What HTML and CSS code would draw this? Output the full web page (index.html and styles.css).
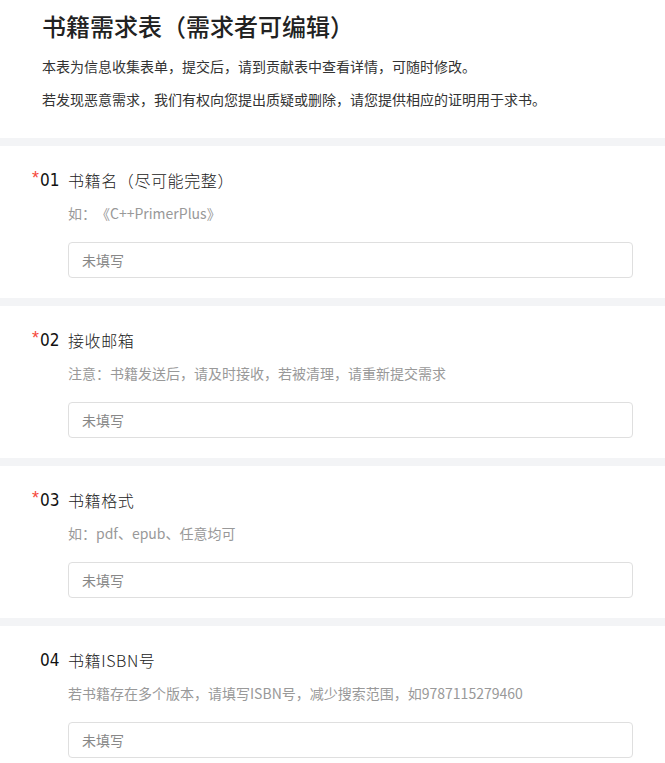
FILE: index.html
```html
<!DOCTYPE html>
<html lang="zh-CN">
<head>
<meta charset="utf-8">
<title>书籍需求表</title>
<link rel="stylesheet" href="styles.css">
</head>
<body>
<header class="intro">
  <h1 class="intro-title">书籍需求表（需求者可编辑）</h1>
  <p class="intro-text">本表为信息收集表单，提交后，请到贡献表中查看详情，可随时修改。</p>
  <p class="intro-text">若发现恶意需求，我们有权向您提出质疑或删除，请您提供相应的证明用于求书。</p>
</header>

<section class="question">
  <div class="q-head"><span class="q-star">*</span><span class="q-num">01</span><span class="q-title">书籍名（尽可能完整）</span></div>
  <div class="q-hint">如：《C++PrimerPlus》</div>
  <div class="q-field"><span class="q-placeholder">未填写</span></div>
</section>

<section class="question">
  <div class="q-head"><span class="q-star">*</span><span class="q-num">02</span><span class="q-title">接收邮箱</span></div>
  <div class="q-hint">注意：书籍发送后，请及时接收，若被清理，请重新提交需求</div>
  <div class="q-field"><span class="q-placeholder">未填写</span></div>
</section>

<section class="question">
  <div class="q-head"><span class="q-star">*</span><span class="q-num">03</span><span class="q-title">书籍格式</span></div>
  <div class="q-hint">如：pdf、epub、任意均可</div>
  <div class="q-field"><span class="q-placeholder">未填写</span></div>
</section>

<section class="question">
  <div class="q-head"><span class="q-star"></span><span class="q-num">04</span><span class="q-title">书籍ISBN号</span></div>
  <div class="q-hint">若书籍存在多个版本，请填写ISBN号，减少搜索范围，如9787115279460</div>
  <div class="q-field"><span class="q-placeholder">未填写</span></div>
</section>
</body>
</html>
```
FILE: styles.css
```css
* { box-sizing: border-box; }

body {
  margin: 0;
  background: #f3f4f6;
  font-family: "Noto Sans CJK SC", "Noto Sans", sans-serif;
  color: #333;
  text-spacing-trim: space-all;
}

.intro {
  background: #fff;
  padding: 10px 33px 28px 42px;
  margin-bottom: 8px;
}

.intro-title {
  margin: 0 0 13px;
  font-size: 24px;
  line-height: 32px;
  font-weight: 500;
  color: #222;
}

.intro-text {
  margin: 0 0 11px;
  font-size: 14px;
  line-height: 22px;
  color: #333;
}
.intro-text:last-child { margin-bottom: 0; }

.question {
  background: #fff;
  padding: 22px 32px 20px 32px;
  margin-bottom: 8px;
  height: 152px;
}

.q-head {
  display: flex;
  align-items: flex-start;
  height: 24px;
  line-height: 24px;
}

.q-star {
  width: 8px;
  color: #f5483b;
  font-family: "Liberation Sans", sans-serif;
  font-size: 18px;
  line-height: 20px;
}

.q-num {
  width: 28px;
  font-family: "DejaVu Sans Condensed", "Liberation Sans Narrow", sans-serif;
  font-size: 17px;
  color: #111;
  line-height: 25px;
}

.q-title {
  font-size: 16px;
  font-weight: 300;
  letter-spacing: 0.6px;
  color: #222;
}

.q-hint {
  margin: 11px 0 0 36px;
  font-size: 14px;
  line-height: 20px;
  color: #999;
}

.q-field {
  margin: 19px 0 0 36px;
  height: 36px;
  border: 1px solid #dfdfdf;
  border-radius: 4px;
  display: flex;
  align-items: center;
  padding-left: 13px;
}

.q-placeholder {
  font-size: 14px;
  color: #888;
}
```
